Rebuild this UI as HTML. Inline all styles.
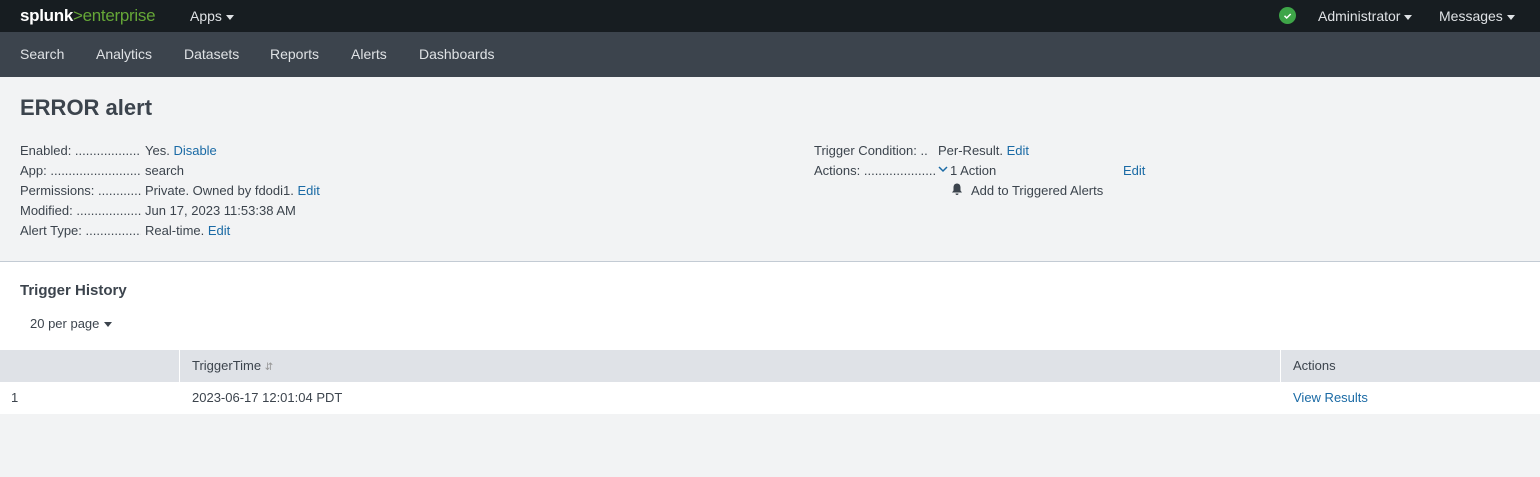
<!DOCTYPE html>
<html><head><style>
*{margin:0;padding:0;box-sizing:border-box}
body{width:1540px;height:477px;overflow:hidden;font-family:"Liberation Sans",sans-serif;font-size:13px;color:#3c444d;background:#f2f3f4;position:relative}
.a{position:absolute;white-space:nowrap}
a{color:#1a6aa5;text-decoration:none}
.top{position:absolute;left:0;top:0;width:1540px;height:32px;background:#171d21;color:#dfe2e5;font-size:14px}
.nav{position:absolute;left:0;top:32px;width:1540px;height:45px;background:#3c444d;color:#dfe2e5;font-size:14px}
.tri{display:inline-block;width:0;height:0;border-left:4px solid transparent;border-right:4px solid transparent;border-top:5px solid currentColor;vertical-align:middle;margin-left:4px}
.lab div{overflow:hidden;width:121px}
</style></head><body>
<div class="top">
<div class="a" style="left:20px;top:6px;font-size:17px;letter-spacing:-0.3px"><span style="color:#fff;font-weight:bold">splunk</span><span style="color:#65a637">&gt;enterprise</span></div>
<div class="a" style="left:190px;top:8px">Apps<span class="tri"></span></div>
<div class="a" style="left:1279px;top:7px;width:17px;height:17px;border-radius:50%;background:#3ea548"><svg width="17" height="17"><path d="M5.5 8.8l2.2 2.2 4-4" stroke="#fff" stroke-width="1.5" fill="none"/></svg></div>
<div class="a" style="left:1318px;top:8px">Administrator<span class="tri"></span></div>
<div class="a" style="left:1439px;top:8px">Messages<span class="tri"></span></div>
</div>
<div class="nav">
<div class="a" style="left:20px;top:14px">Search</div>
<div class="a" style="left:96px;top:14px">Analytics</div>
<div class="a" style="left:184px;top:14px">Datasets</div>
<div class="a" style="left:270px;top:14px">Reports</div>
<div class="a" style="left:351px;top:14px">Alerts</div>
<div class="a" style="left:419px;top:14px">Dashboards</div>
</div>
<div class="a" style="left:20px;top:95px;font-size:22px;font-weight:bold;color:#3c444d">ERROR alert</div>
<div class="a lab" style="left:20px;top:141px;line-height:20px"><div>Enabled: ..........................</div><div>App: ......................................</div><div>Permissions: ...............</div><div>Modified: ........................</div><div>Alert Type: ......................</div></div>
<div class="a" style="left:145px;top:141px;line-height:20px">Yes. <a>Disable</a><br>search<br>Private. Owned by fdodi1. <a>Edit</a><br>Jun 17, 2023 11:53:38 AM<br>Real-time. <a>Edit</a></div>
<div class="a" style="left:814px;top:141px;line-height:20px">Trigger Condition: ..<br>Actions: ....................</div>
<div class="a" style="left:938px;top:141px;line-height:20px">Per-Result. <a>Edit</a></div>
<div class="a" style="left:937px;top:163px"><svg width="12" height="12"><path d="M2 4l4 4 4-4" stroke="#1a6aa5" stroke-width="1.5" fill="none"/></svg></div>
<div class="a" style="left:950px;top:161px;line-height:20px">1 Action</div>
<div class="a" style="left:1123px;top:161px;line-height:20px"><a>Edit</a></div>
<div class="a" style="left:950px;top:182px"><svg width="14" height="14"><path d="M7 1.5c-2.3 0-3.5 1.8-3.5 4v3L2 10.5h10L10.5 8.5v-3c0-2.2-1.2-4-3.5-4zM5.5 11.5a1.5 1.5 0 0 0 3 0z" fill="#3c444d"/></svg></div>
<div class="a" style="left:971px;top:181px;line-height:20px">Add to Triggered Alerts</div>
<div class="a" style="left:0;top:261px;width:1540px;height:153px;background:#fff;border-top:1px solid #c3cbd4"></div>
<div class="a" style="left:20px;top:282px;font-size:15px;font-weight:bold">Trigger History</div>
<div class="a" style="left:30px;top:316px">20 per page<span class="tri" style="margin-left:5px"></span></div>
<div class="a" style="left:0;top:350px;width:1540px;height:32px;background:#dfe2e7"></div>
<div class="a" style="left:179px;top:350px;width:1px;height:32px;background:#fff"></div>
<div class="a" style="left:1280px;top:350px;width:1px;height:32px;background:#fff"></div>
<div class="a" style="left:192px;top:358px">TriggerTime <span style="color:#999;font-size:10px">&#8693;</span></div>
<div class="a" style="left:1293px;top:358px">Actions</div>
<div class="a" style="left:11px;top:390px">1</div>
<div class="a" style="left:192px;top:390px">2023-06-17 12:01:04 PDT</div>
<div class="a" style="left:1293px;top:390px"><a>View Results</a></div>
</body></html>
